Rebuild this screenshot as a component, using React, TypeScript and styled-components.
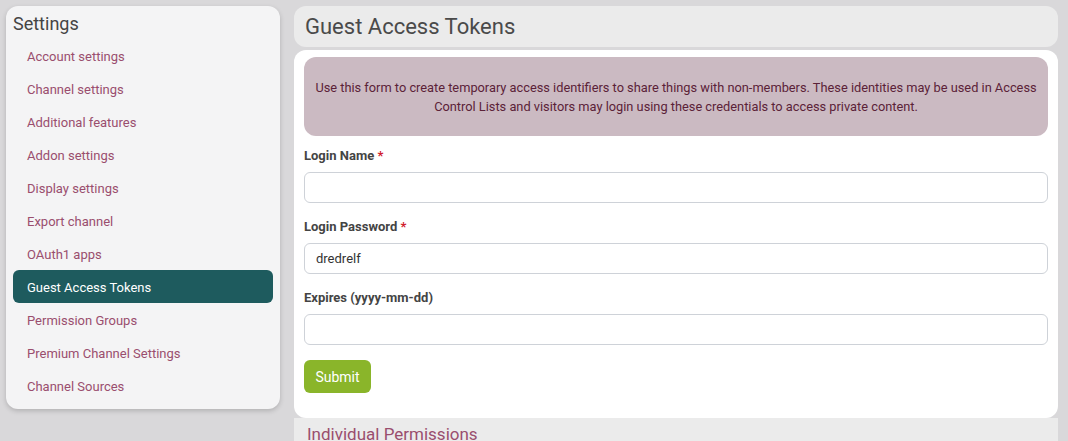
import React from "react";
import styled, { createGlobalStyle } from "styled-components";

const Global = createGlobalStyle`
  html, body { margin: 0; padding: 0; }
  body {
    background: #d9d8da;
    font-family: Roboto, "Liberation Sans", sans-serif;
    height: 441px;
    overflow: hidden;
  }
`;

const Page = styled.div`
  display: flex;
  align-items: flex-start;
  gap: 14px;
  padding: 6px 10px 0 6px;
`;

const Sidebar = styled.aside`
  width: 274px;
  flex: none;
  background: #f4f4f5;
  border-radius: 12px;
  box-shadow: 0 2px 5px rgba(0, 0, 0, 0.18);
  padding: 0 7px 7px 7px;
  box-sizing: border-box;
`;

const SideTitle = styled.div`
  height: 33px;
  display: flex;
  align-items: center;
  font-size: 18px;
  color: #444;
  padding-top: 1px;
  box-sizing: border-box;
`;

const NavList = styled.nav`
  display: flex;
  flex-direction: column;
`;

const NavItem = styled.a<{ $active?: boolean }>`
  height: 33px;
  display: flex;
  align-items: center;
  padding-left: 14px;
  padding-top: 1px;
  box-sizing: border-box;
  font-size: 13px;
  text-decoration: none;
  border-radius: 6px;
  color: ${(p) => (p.$active ? "#ffffff" : "#9a4e6e")};
  background: ${(p) => (p.$active ? "#1e5b5e" : "transparent")};
`;

const Main = styled.main`
  flex: 1;
  display: flex;
  flex-direction: column;
`;

const Header = styled.div`
  height: 41px;
  background: #ebebeb;
  border-radius: 12px;
  display: flex;
  align-items: center;
  padding-left: 11px;
  font-size: 22px;
  color: #4a4a4a;
`;

const Card = styled.section`
  margin-top: 3px;
  background: #ffffff;
  border-radius: 12px;
  padding: 7px 10px 25px 10px;
  display: flex;
  flex-direction: column;
`;

const Alert = styled.div`
  background: #cbbac2;
  border-radius: 12px;
  color: #5b2238;
  font-size: 12.8px;
  line-height: 19px;
  text-align: center;
  padding: 21px 8px 20px;
`;

const Field = styled.div<{ $first?: boolean }>`
  display: flex;
  flex-direction: column;
  margin-top: ${(p) => (p.$first ? "12px" : "16px")};
`;

const Label = styled.label`
  font-size: 13px;
  font-weight: bold;
  color: #444;
  line-height: 16px;
  margin-bottom: 8px;
`;

const Req = styled.span`
  color: #d0202c;
`;

const Input = styled.input`
  height: 31px;
  box-sizing: border-box;
  border: 1px solid #ced2d8;
  border-radius: 6px;
  padding: 0 11px;
  font-family: Roboto, "Liberation Sans", sans-serif;
  font-size: 13px;
  color: #333;
  background: #fff;
  outline: none;
`;

const Submit = styled.button`
  margin-top: 15px;
  align-self: flex-start;
  width: 67px;
  height: 33px;
  border: none;
  border-radius: 6px;
  background: #8ab52a;
  color: #fff;
  font-family: Roboto, "Liberation Sans", sans-serif;
  font-size: 14px;
`;

const Section = styled.div`
  background: #ebebeb;
  padding: 6px 13px 10px;
  font-size: 17px;
  color: #9a4e6e;
`;

const items = [
  "Account settings",
  "Channel settings",
  "Additional features",
  "Addon settings",
  "Display settings",
  "Export channel",
  "OAuth1 apps",
  "Guest Access Tokens",
  "Permission Groups",
  "Premium Channel Settings",
  "Channel Sources",
];

export default function App() {
  return (
    <>
      <Global />
      <Page>
        <Sidebar>
          <SideTitle>Settings</SideTitle>
          <NavList>
            {items.map((t) => (
              <NavItem key={t} $active={t === "Guest Access Tokens"}>
                {t}
              </NavItem>
            ))}
          </NavList>
        </Sidebar>
        <Main>
          <Header>Guest Access Tokens</Header>
          <Card>
            <Alert>
              Use this form to create temporary access identifiers to share things with non-members. These identities may be used in Access Control Lists and visitors may login using these credentials to access private content.
            </Alert>
            <Field $first>
              <Label>
                Login Name <Req>*</Req>
              </Label>
              <Input defaultValue="" />
            </Field>
            <Field>
              <Label>
                Login Password <Req>*</Req>
              </Label>
              <Input defaultValue="dredrelf" />
            </Field>
            <Field>
              <Label>Expires (yyyy-mm-dd)</Label>
              <Input defaultValue="" />
            </Field>
            <Submit>Submit</Submit>
          </Card>
          <Section>Individual Permissions</Section>
        </Main>
      </Page>
    </>
  );
}
